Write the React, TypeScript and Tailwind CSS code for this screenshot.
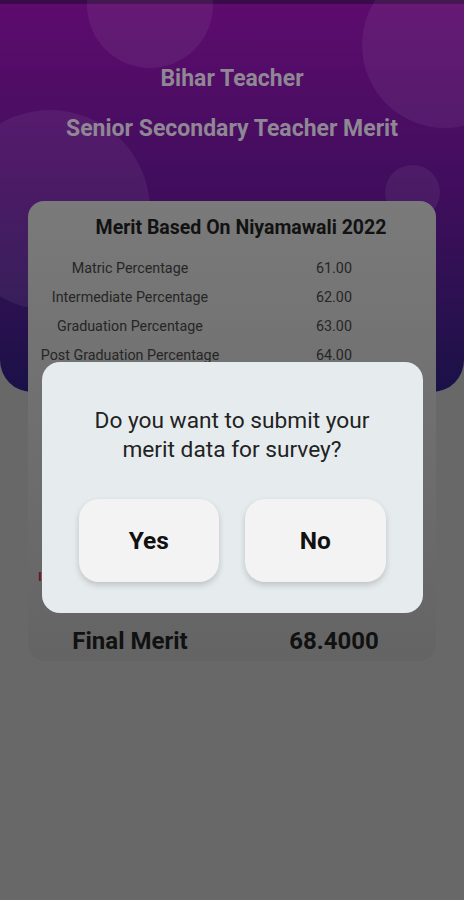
import React from "react";

const ROWS = [
  { label: "Matric Percentage", value: "61.00" },
  { label: "Intermediate Percentage", value: "62.00" },
  { label: "Graduation Percentage", value: "63.00" },
  { label: "Post Graduation Percentage", value: "64.00" },
];

const Bubble = ({ className }: { className: string }) => (
  <div className={"absolute rounded-full bg-white/[0.06] " + className} />
);

const MeritCard = () => {
  return (
    <div className="relative mx-[28px] -mt-[191px] flex h-[460px] flex-col rounded-[16px] bg-gradient-to-b from-[#7a7a7a] to-[#646464] text-[#1c1c1c]">
      <h2 className="pl-[18px] pt-[15px] text-center text-[19.5px] leading-[24px] font-bold text-[#121212]">
        Merit Based On Niyamawali 2022
      </h2>
      <div className="mt-[14px] flex flex-col">
        {ROWS.map((r) => (
          <div key={r.label} className="grid h-[29px] grid-cols-2 items-center text-[14.3px] text-[#262626]">
            <span className="text-center">{r.label}</span>
            <span className="text-center">{r.value}</span>
          </div>
        ))}
      </div>
      {/* rows under the dialog */}
      <div className="h-[200px]" />
      <p className="pl-[10px] text-[13px] leading-[14px] font-bold text-[#6e1020]">I</p>
      <div className="mt-auto grid grid-cols-2 pb-[5px] text-[24px] leading-[30px] font-bold text-[#111]">
        <span className="text-center">Final Merit</span>
        <span className="text-center">68.4000</span>
      </div>
    </div>
  );
};

const SurveyDialog = () => {
  return (
    <div className="absolute inset-0 flex justify-center pt-[362px]">
      <div className="flex h-[251px] w-[381px] flex-col rounded-[18px] bg-[#e6ecee] px-[37px] pt-[44px]">
        <p className="text-center text-[22.7px] leading-[29px] text-[#222]">
          Do you want to submit your
          <br />
          merit data for survey?
        </p>
        <div className="mt-[35px] grid grid-cols-2 gap-[26px]">
          <button className="h-[83px] rounded-[20px] bg-[#f3f3f3] pt-[2px] text-[24.5px] font-bold text-[#111] shadow-[0_3px_6px_rgba(0,0,0,0.18)]">
            Yes
          </button>
          <button className="h-[83px] rounded-[20px] bg-[#f3f3f3] pt-[2px] text-[24.5px] font-bold text-[#111] shadow-[0_3px_6px_rgba(0,0,0,0.18)]">
            No
          </button>
        </div>
      </div>
    </div>
  );
};

export default function App() {
  return (
    <div className="relative min-h-[900px] w-full overflow-hidden bg-[#686868] font-['Roboto',sans-serif]">
      <header className="relative h-[392px] overflow-hidden rounded-b-[32px] bg-gradient-to-b from-[#5e0b6e] via-[#3f0d5c] to-[#1a1147]">
        <div className="absolute inset-x-0 top-0 h-[4px] bg-[#3a0a4a]" />
        <Bubble className="left-[87px] -top-[58px] h-[126px] w-[126px]" />
        <Bubble className="left-[362px] -top-[38px] h-[166px] w-[166px]" />
        <Bubble className="-left-[50px] top-[110px] h-[200px] w-[200px]" />
        <Bubble className="left-[385px] top-[165px] h-[55px] w-[55px]" />
        <div className="relative flex flex-col items-center pt-[65px] text-[23px] leading-[28px] font-bold text-[#8f8794]">
          <h1>Bihar Teacher</h1>
          <p className="mt-[22px]">Senior Secondary Teacher Merit</p>
        </div>
      </header>
      <MeritCard />
      <SurveyDialog />
    </div>
  );
}
